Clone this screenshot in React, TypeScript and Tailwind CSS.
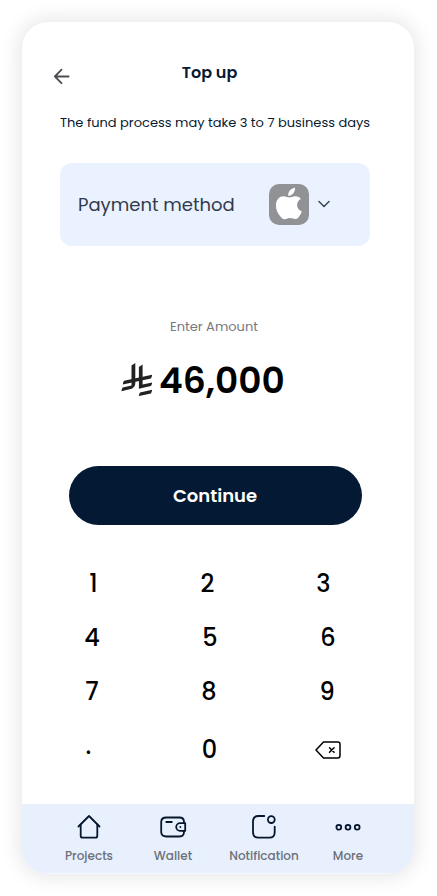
import clsx from 'clsx';
import React from 'react';

const BackIcon = () => (
  <svg
    className="h-4 w-4 text-[#4b4d52]"
    fill="none"
    stroke="currentColor"
    strokeLinecap="round"
    strokeLinejoin="round"
    strokeWidth="1.8"
    viewBox="0 0 16 16"
  >
    <path d="M14.600 8.500H.9M7.500 1.700L.9 8.500l6.600 6.700" />
  </svg>
);

const AppleIcon = () => (
  <svg className="h-[34px] w-7" fill="white" viewBox="0 0 28 34">
    <path d="M20 .8c.3 2.300-.8 4.500-2.100 5.900-1.300 1.400-3 2.100-4.700 2-.2-2.200.8-4.300 2.100-5.600C16.600 1.800 18.500 1 20 .8zM25.900 11.800c-3 1.800-4 4.300-3.800 6.800.2 2.500 1.700 4.700 4.700 6-.8 2.300-2 4.300-3.400 5.800-1.500 1.700-3.200 2.100-5.300 1.200-2.200-.9-4.300-.9-6.500.1-1.900.9-3.600.6-5.100-1C2.700 26.900.6 22.500 1 17.500c.4-5.100 3.500-8.300 7.700-8.300 2.200 0 3.900 1.300 5.700 1.300 1.700 0 3.300-1.400 6-1.300 2.300.1 4.200 1 5.500 2.600z" />
  </svg>
);

const RiyalIcon = () => (
  <svg className="mb-0.5 h-[34px] w-8" fill="#222" viewBox="0 0 32 34">
    <path d="M10.500 3.500L14.300 1v20.200c0 1.500-.5 2.600-1.500 3.900-1 1.300-1.800 1.700-3.200 2L.4 29.200c.1-1.500.5-2.700 1.200-3.800l8.900-2z" />
    <path d="M17.900 5.100L21.600 2.600v19.900l9.500-2.100c-.1 1.500-.5 2.600-1.200 3.700l-12 2.600z" />
    <path d="M3 18.800L31.100 12.700c-.1 1.400-.5 2.600-1.200 3.700L1.800 22.500c.1-1.400.5-2.600 1.200-3.700zM19 30.400l12.100-2.600c-.1 1.400-.5 2.600-1.200 3.700l-12.100 2.600c.1-1.400.5-2.600 1.200-3.700z" />
  </svg>
);

const BackspaceIcon = () => (
  <svg
    className="mb-px h-[18px] w-[26px]"
    fill="none"
    stroke="black"
    strokeLinecap="round"
    strokeLinejoin="round"
    strokeWidth="1.5"
    viewBox="0 0 26 18"
  >
    <path d="M8.500 1h14.300A2.200 2.200 0 0 1 25 3.200v11.600a2.200 2.200 0 0 1-2.200 2.200H8.500L1 9z" />
    <path d="M14.500 6.700l4.600 4.600M19.100 6.700l-4.600 4.600" />
  </svg>
);

const navIconProps = {
  className: 'h-7 w-7 text-[#06162c]',
  fill: 'none',
  stroke: 'currentColor',
  strokeLinecap: 'round' as const,
  strokeLinejoin: 'round' as const,
  strokeWidth: 1.8,
  viewBox: '0 0 28 28',
};

const HomeIcon = () => (
  <svg {...navIconProps}>
    <path d="M3.500 13.500L14 3l10.500 10.500" />
    <path d="M5.700 11.500v11.200a2 2 0 0 0 2 2h12.600a2 2 0 0 0 2-2V11.500" />
  </svg>
);

const WalletIcon = () => (
  <svg {...navIconProps}>
    <path d="M25 10.200V9c0-2.700-1.800-4.500-4.500-4.500h-13C4 4.500 2.200 6.300 2.200 9v10c0 2.700 1.800 4.500 5.300 4.500h13c2.700 0 4.500-1.800 4.500-4.500v-1.200" />
    <path d="M26.200 10.200H21a3.800 3.800 0 0 0 0 7.600h5.200z" />
    <path d="M7.300 9h5.500M21.300 14h.1" />
  </svg>
);

const NotificationIcon = () => (
  <svg {...navIconProps}>
    <path d="M14.300 3H8.500C4.700 3 3 4.700 3 8.500v10.800c0 3.700 1.700 5.400 5.500 5.400h10.800c3.700 0 5.400-1.700 5.400-5.400v-5.700" />
    <circle cx="21.300" cy="6.600" r="3.400" />
  </svg>
);

const MoreIcon = () => (
  <svg {...navIconProps}>
    <circle cx="4.800" cy="14.300" r="2.400" />
    <circle cx="14" cy="14.300" r="2.400" />
    <circle cx="23.200" cy="14.300" r="2.400" />
  </svg>
);

const keys = [
  { label: '1', style: 'pl-[3px]' },
  { label: '2', style: 'pr-[5px]' },
  { label: '3', style: 'pr-[9px]' },
  { label: '4', style: '' },
  { label: '5', style: '' },
  { label: '6', style: '' },
  { label: '7', style: '' },
  { label: '8', style: 'pr-[2px]' },
  { label: '9', style: 'pr-[2px]' },
  { label: '.', style: 'pr-[7px] pb-2' },
  { label: '0', style: 'pr-[1px]' },
];

const tabs = [
  { Icon: HomeIcon, label: 'Projects', width: 'w-[84px]' },
  { Icon: WalletIcon, label: 'Wallet', width: 'w-[84px]' },
  { Icon: NotificationIcon, label: 'Notification', width: 'w-[98px]' },
  { Icon: MoreIcon, label: 'More', width: 'w-[70px]' },
];

const TopUp: React.FC = () => {
  return (
    <div className="h-[896px] w-[437px] overflow-hidden bg-white px-[22px] pt-[22px] font-['Poppins','Inter',sans-serif]">
      <div className="flex h-[852px] w-[392px] flex-col overflow-hidden rounded-[26px] bg-white shadow-[0_0_20px_3px_rgba(0,0,0,0.10)]">
        <header className="flex h-[78px] pl-8 pt-[39px]">
          <button className="mt-[7px] h-4 w-4">
            <BackIcon />
          </button>
          <h1 className="ml-20 w-[119px] whitespace-nowrap text-center text-base font-semibold leading-6 text-[#071a31]">
            Top up
          </h1>
        </header>
        <p className="ml-[38px] mt-3 whitespace-nowrap text-[13px] leading-[22px] text-[#071a31]">
          The fund process may take 3 to 7 business days
        </p>

        <button className="ml-[38px] mt-[29px] flex h-[83px] w-[310px] shrink-0 items-center rounded-xl bg-[#eaf1ff] pl-[18px]">
          <span className="w-[191px] whitespace-nowrap text-left text-lg text-[#303a4b]">
            Payment method
          </span>
          <span className="mb-px flex h-[41px] w-10 items-center justify-center rounded-[10px] bg-[#919295]">
            <AppleIcon />
          </span>
          <svg
            className="mb-px ml-2 h-3.5 w-3.5"
            fill="none"
            stroke="#3d4654"
            strokeLinecap="round"
            strokeLinejoin="round"
            strokeWidth="1.5"
            viewBox="0 0 14 14"
          >
            <path d="M2 4.500l5 5 5-5" />
          </svg>
        </button>

        <div className="ml-[38px] mt-[69px] w-[308px] text-center text-[13px] leading-6 text-[#77797e]">
          Enter Amount
        </div>
        <div className="ml-[99px] mt-[19px] flex h-11 items-center">
          <RiyalIcon />
          <span className="ml-1.5 pt-0.5 text-4xl font-semibold leading-none text-black">
            46,000
          </span>
        </div>

        <button className="ml-[47px] mt-16 h-[59px] w-[293px] shrink-0 rounded-full bg-[#041a34] pr-px text-lg font-semibold text-white">
          Continue
        </button>

        <div className="ml-[11px] mt-8 grid w-[354px] grid-cols-3 grid-rows-[54px_54px_54px_62px] text-2xl font-medium text-black">
          {keys.map(({ label, style }) => (
            <button
              className={clsx('flex items-center justify-center', style)}
              key={label}
            >
              {label}
            </button>
          ))}
          <button className="flex items-center justify-center">
            <BackspaceIcon />
          </button>
        </div>

        <nav className="mt-auto flex h-[70px] shrink-0 border-b border-[#f4f7fc] bg-[#e8f0fe] pl-[25px] pt-[9px]">
          {tabs.map(({ Icon, label, width }) => (
            <button
              className={clsx(
                'flex flex-col items-center whitespace-nowrap text-xs font-medium text-[#6c7079]',
                width
              )}
              key={label}
            >
              <Icon />
              <span className="mt-1.5 leading-[18px]">{label}</span>
            </button>
          ))}
        </nav>
      </div>
    </div>
  );
};

export default TopUp;
